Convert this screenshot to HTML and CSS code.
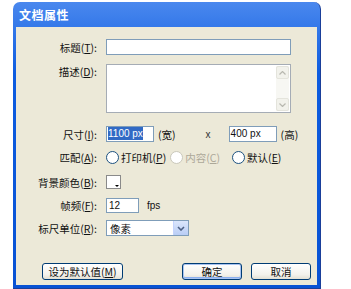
FILE: index.html
```html
<!DOCTYPE html>
<html lang="zh-CN">
<head>
    <meta charset="UTF-8">
    <title>文档属性</title>
    <link rel="stylesheet" href="styles.css">
</head>
<body>
    <div class="dialog">
        <div class="titlebar">文档属性</div>
        <div class="content">
            <div class="row r-title">
                <label class="label">标题(<u>T</u>):</label>
                <div class="input wide"></div>
            </div>
            <div class="row r-desc">
                <label class="label">描述(<u>D</u>):</label>
                <div class="textarea">
                    <div class="scrollbar">
                        <div class="sb-btn">
                            <svg width="7" height="4" viewBox="0 0 7 4"><path d="M0.5 3.5 L3.5 0.5 L6.5 3.5" fill="none" stroke="#b8b8b0" stroke-width="1.2"/></svg>
                        </div>
                        <div class="sb-btn">
                            <svg width="7" height="4" viewBox="0 0 7 4"><path d="M0.5 0.5 L3.5 3.5 L6.5 0.5" fill="none" stroke="#b8b8b0" stroke-width="1.2"/></svg>
                        </div>
                    </div>
                </div>
            </div>
            <div class="row r-size">
                <label class="label">尺寸(<u>I</u>):</label>
                <div class="input size"><span class="selected">1100 px</span></div>
                <span class="unit">(宽)</span>
                <span class="times">x</span>
                <div class="input size">400 px</div>
                <span class="unit">(高)</span>
            </div>
            <div class="row r-match">
                <label class="label">匹配(<u>A</u>):</label>
                <span class="radio"></span><span class="opt">打印机(<u>P</u>)</span>
                <span class="radio disabled"></span><span class="opt disabled">内容(<u>C</u>)</span>
                <span class="radio"></span><span class="opt">默认(<u>E</u>)</span>
            </div>
            <div class="row r-bg">
                <label class="label">背景颜色(<u>B</u>):</label>
                <div class="swatch"><span class="swatch-arrow"></span></div>
            </div>
            <div class="row r-fps">
                <label class="label">帧频(<u>F</u>):</label>
                <div class="input fps">12</div>
                <span class="fps-unit">fps</span>
            </div>
            <div class="row r-ruler">
                <label class="label">标尺单位(<u>R</u>):</label>
                <div class="select">
                    <span class="select-text">像素</span>
                    <span class="select-btn">
                        <svg width="8" height="5" viewBox="0 0 8 5"><path d="M1 1 L4 4 L7 1" fill="none" stroke="#4d6185" stroke-width="1.6"/></svg>
                    </span>
                </div>
            </div>
            <div class="buttons">
                <button class="btn btn-default-val">设为默认值(<u>M</u>)</button>
                <div class="spacer"></div>
                <button class="btn btn-ok">确定</button>
                <button class="btn btn-cancel">取消</button>
            </div>
        </div>
    </div>
</body>
</html>
```

FILE: styles.css
```css
body {
    margin: 0;
    background: #ffffff;
    font-family: "Noto Sans CJK SC", "DejaVu Sans", sans-serif;
    font-size: 10.5px;
    color: #111;
}
.dialog {
    margin: 2px 0 0 13px;
    width: 308px;
    height: 287px;
    box-sizing: border-box;
    background: linear-gradient(180deg, #4a88ee 0%, #0d5ce0 25%, #0852d4 100%);
    border-radius: 7px 7px 0 0;
    padding: 0 3px 3px 3px;
    display: flex;
    flex-direction: column;
    border-right: 1px solid #1a3f9a;
    border-bottom: 1px solid #1a3f9a;
}
.titlebar {
    height: 25px;
    line-height: 25px;
    color: #fff;
    font-weight: bold;
    font-size: 12px;
    padding-left: 3px;
    letter-spacing: 0.5px;
}
.content {
    flex: 1;
    background: #ece9d8;
    padding-top: 8px;
    display: flex;
    flex-direction: column;
}
.row {
    display: flex;
    align-items: center;
}
.label {
    width: 81px;
    text-align: right;
    margin-right: 9px;
    white-space: nowrap;
    flex-shrink: 0;
}
.r-title { height: 24px; }
.r-desc { height: 63px; align-items: flex-start; }
.r-desc .label { margin-top: 5px; }
.r-size { height: 24px; }
.r-match { height: 22px; }
.r-bg { height: 28px; }
.r-fps { height: 19px; }
.r-ruler { height: 26px; }

.input {
    height: 16px;
    box-sizing: border-box;
    border: 1px solid #7f9db9;
    background: #fff;
    font-family: "Liberation Sans", sans-serif;
    font-size: 10px;
    line-height: 14px;
    padding-left: 1px;
}
.wide { width: 185px; }
.size { width: 48px; }
.fps { width: 33px; height: 15px; line-height: 13px; padding-left: 2px; }
.selected {
    background: #316ac5;
    color: #fff;
    padding: 1px 0;
}
.unit {
    margin-left: 4px;
}
.times {
    font-family: "Liberation Sans", sans-serif;
    font-size: 10px;
    color: #333;
    margin: 0 18px 0 30px;
}
.textarea {
    margin-top: 5px;
    width: 185px;
    height: 49px;
    box-sizing: border-box;
    border: 1px solid #a5acb5;
    background: #fff;
    display: flex;
    justify-content: flex-end;
    padding: 1px;
}
.scrollbar {
    width: 13px;
    background: #f7f7f3;
    display: flex;
    flex-direction: column;
    justify-content: space-between;
}
.sb-btn {
    height: 13px;
    box-sizing: border-box;
    border: 1px solid #e4e4dc;
    border-radius: 2px;
    background: #f2f2ec;
    display: flex;
    align-items: center;
    justify-content: center;
}
.radio {
    width: 11px;
    height: 11px;
    border: 1px solid #1c5180;
    border-radius: 50%;
    background: #fff;
    margin-right: 2px;
    flex-shrink: 0;
}
.radio.disabled {
    border-color: #cac8bb;
}
.opt {
    margin-right: 4px;
}
.opt.disabled {
    color: #aca899;
    margin-right: 12px;
}
.swatch {
    width: 13px;
    height: 12px;
    border: 1px solid #8a8a8a;
    background: #fff;
    position: relative;
}
.swatch-arrow {
    position: absolute;
    right: 1px;
    bottom: 1px;
    border-left: 2px solid transparent;
    border-right: 2px solid transparent;
    border-top: 2px solid #000;
}
.fps-unit {
    font-family: "Liberation Sans", sans-serif;
    font-size: 10px;
    margin-left: 8px;
}
.select {
    width: 83px;
    height: 16px;
    box-sizing: border-box;
    border: 1px solid #7f9db9;
    background: #fff;
    display: flex;
    align-items: center;
}
.select-text {
    flex: 1;
    padding-left: 3px;
}
.select-btn {
    width: 14px;
    height: 14px;
    background: linear-gradient(180deg, #dbe6fb, #b9cdf5);
    border-left: 1px solid #c3d3fd;
    display: flex;
    align-items: center;
    justify-content: center;
}
.buttons {
    display: flex;
    margin-top: 22px;
    padding: 0 6px 0 26px;
}
.spacer { flex: 1; }
.btn {
    height: 17px;
    box-sizing: border-box;
    border: 1px solid #003c74;
    border-radius: 3px;
    background: linear-gradient(180deg, #ffffff 0%, #f3f2ec 70%, #e3e0d4 100%);
    font-family: "Noto Sans CJK SC", sans-serif;
    font-size: 10.5px;
    padding: 0;
    line-height: 14px;
    color: #111;
}
.btn-default-val { width: 81px; }
.btn-ok {
    width: 60px;
    box-shadow: inset 0 0 0 1px #a8c3f0, inset 0 -1px 0 1px #8cb0f0;
    margin-right: 9px;
}
.btn-cancel { width: 60px; }
```
